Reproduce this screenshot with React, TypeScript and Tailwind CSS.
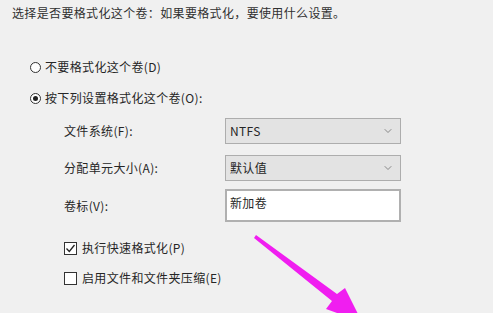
import { ChevronDown } from 'lucide-react';

const font = { fontFamily: '"Noto Sans CJK SC", "Noto Sans", sans-serif' };

function Radio({ checked, label }: { checked?: boolean; label: string }) {
  return (
    <div className="flex items-center h-[16px] pl-[30px] gap-[4px]">
      <span className="w-[11px] h-[11px] rounded-full border border-[#333] bg-white flex items-center justify-center">
        {checked && <span className="w-[5px] h-[5px] rounded-full bg-[#222]" />}
      </span>
      <span>{label}</span>
    </div>
  );
}

function Check({ checked, label }: { checked?: boolean; label: string }) {
  return (
    <div className="flex items-center h-[16px] pl-[64px] gap-[5px]">
      <span className="w-[13px] h-[13px] border border-[#333] bg-white flex items-center justify-center">
        {checked && (
          <svg width="11" height="11" viewBox="0 0 11 11">
            <path d="M1.5 5.5 L4.3 8.5 L9.5 2" fill="none" stroke="#222" strokeWidth="1.3" />
          </svg>
        )}
      </span>
      <span>{label}</span>
    </div>
  );
}

function Select({ value }: { value: string }) {
  return (
    <div className="w-[176px] h-[26px] bg-[#e3e3e3] border border-[#adadad] flex items-center justify-between pl-[4px] pr-[6px]">
      <span>{value}</span>
      <ChevronDown size={12} strokeWidth={1.6} className="text-[#707070]" />
    </div>
  );
}

export default function App() {
  return (
    <div className="relative w-[493px] h-[313px] overflow-hidden bg-[#f0f0f0] text-[12px] leading-[16px] tracking-[0.35px] text-[#262626]" style={font}>
      <div className="pl-[12px] pt-[5px] text-[#303030]">选择是否要格式化这个卷：如果要格式化，要使用什么设置。</div>

      <div className="mt-[38px]">
        <Radio label="不要格式化这个卷(D)" />
      </div>
      <div className="mt-[15px]">
        <Radio checked label="按下列设置格式化这个卷(O):" />
      </div>

      <div className="pl-[64px] mt-[12px] flex flex-col">
        <div className="flex items-center">
          <span className="w-[161px]">文件系统(F):</span>
          <Select value="NTFS" />
        </div>
        <div className="flex items-center mt-[11px]">
          <span className="w-[161px]">分配单元大小(A):</span>
          <Select value="默认值" />
        </div>
        <div className="flex items-center mt-[8px]">
          <span className="w-[161px]">卷标(V):</span>
          <div className="w-[176px] h-[33px] bg-white border-2 border-[#b0b0b0] pl-[3px] pt-[4px]">新加卷</div>
        </div>
      </div>

      <div className="mt-[18px]">
        <Check checked label="执行快速格式化(P)" />
      </div>
      <div className="mt-[14px]">
        <Check label="启用文件和文件夹压缩(E)" />
      </div>

      <svg className="absolute left-0 top-0" width="493" height="313" viewBox="0 0 493 313">
        <polygon
          points="256,235 337,294 345,288 362,322 326,309 332,301 254,238"
          fill="#f01ef0"
        />
      </svg>
    </div>
  );
}
